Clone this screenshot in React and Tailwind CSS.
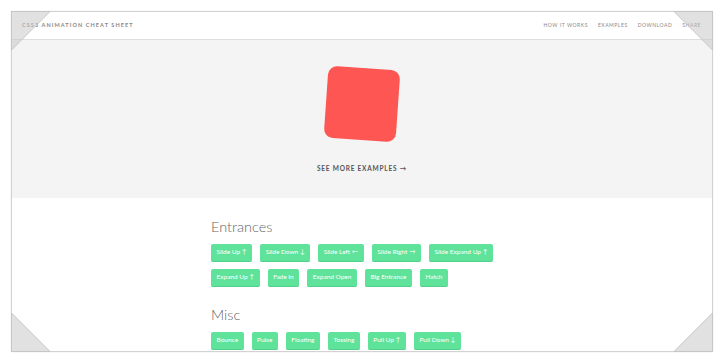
import React from "react";

const entrances = [
  ["Slide Up ↑", "Slide Down ↓", "Slide Left ←", "Slide Right →", "Slide Expand Up ↑"],
  ["Expand Up ↑", "Fade In", "Expand Open", "Big Entrance", "Hatch"],
];
const misc = ["Bounce", "Pulse", "Floating", "Tossing", "Pull Up ↑", "Pull Down ↓"];

function Btn({ label }) {
  return (
    <button className="h-[18px] px-[5.5px] rounded-[2px] bg-[#5fe39b] text-white text-[6.5px] leading-none border-b border-[#52cf8a] font-['Lato',sans-serif] whitespace-nowrap">
      {label}
    </button>
  );
}

function Corner({ className, points }) {
  return (
    <svg className={`absolute w-[40px] h-[40px] ${className}`} viewBox="0 0 40 40">
      <polygon points={points} fill="rgba(200,200,200,0.55)" stroke="#c6c6c6" strokeWidth="1" />
    </svg>
  );
}

export default function App() {
  return (
    <div className="relative w-[724px] h-[362px] bg-white p-[11px] font-['Lato',sans-serif]">
      <div className="w-[702px] h-[341px] border border-[#d2d2d2] shadow-[0_0_1px_rgba(0,0,0,0.15)] overflow-hidden bg-white flex flex-col">
        {/* Header */}
        <div className="h-[28px] shrink-0 flex items-center justify-between pl-[10px] pr-[11px] border-b border-[#dedede] bg-white">
          <span className="text-[5.5px] tracking-[1.1px] text-[#888] font-bold">CSS3 ANIMATION CHEAT SHEET</span>
          <nav className="flex gap-[10px] text-[5px] tracking-[0.55px] text-[#888]">
            <span>HOW IT WORKS</span>
            <span>EXAMPLES</span>
            <span>DOWNLOAD</span>
            <span>SHARE</span>
          </nav>
        </div>

        {/* Hero */}
        <div className="h-[158px] shrink-0 bg-[#f4f4f4] flex flex-col items-center pt-[28px]">
          <div className="w-[72px] h-[72px] rounded-[9px] bg-[#fe5652] rotate-[4deg]" />
          <span className="mt-[24px] text-[6.5px] font-bold tracking-[0.8px] text-[#555]">SEE MORE EXAMPLES →</span>
        </div>

        {/* Content */}
        <div className="pl-[199px] pt-[19px]">
          <h2 className="text-[14.5px] leading-[20px] font-light text-[#666]">Entrances</h2>
          <div className="mt-[7px] flex flex-col gap-[7px]">
            {entrances.map((row, i) => (
              <div key={i} className="flex gap-[8px]">
                {row.map((l) => (
                  <Btn key={l} label={l} />
                ))}
              </div>
            ))}
          </div>
          <h2 className="mt-[18px] text-[14.5px] leading-[20px] font-light text-[#666]">Misc</h2>
          <div className="mt-[7px] flex gap-[8px]">
            {misc.map((l) => (
              <Btn key={l} label={l} />
            ))}
          </div>
        </div>
      </div>

      {/* Photo corners */}
      <Corner className="left-[11px] top-[11px]" points="0.5,0.5 39,0.5 0.5,39" />
      <Corner className="left-[673px] top-[11px]" points="1,0.5 39.5,0.5 39.5,39" />
      <Corner className="left-[11px] top-[312px]" points="0.5,1 0.5,39.5 39,39.5" />
      <Corner className="left-[673px] top-[312px]" points="39.5,1 39.5,39.5 1,39.5" />
    </div>
  );
}
